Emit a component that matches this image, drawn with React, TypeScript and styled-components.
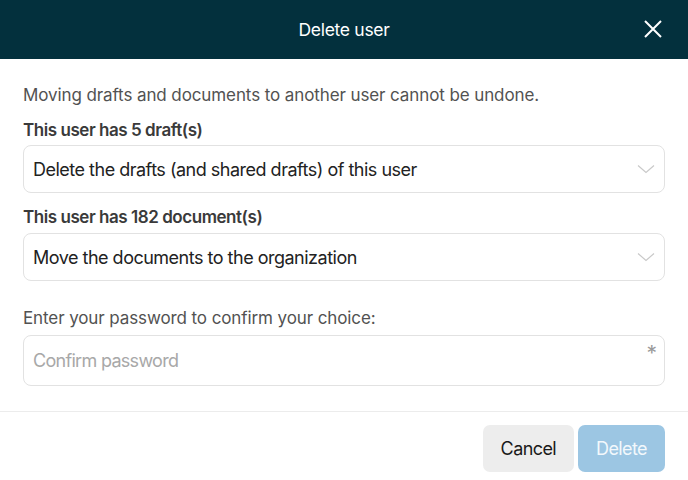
import React from "react";
import styled, { createGlobalStyle } from "styled-components";

const Global = createGlobalStyle`
  html, body { margin: 0; padding: 0; background: #ffffff; }
  body { font-family: Inter, "Noto Sans", sans-serif; color: #333; }
  * { box-sizing: border-box; }
`;

const Dialog = styled.div`
  width: 688px;
  height: 480px;
  background: #fff;
  display: flex;
  flex-direction: column;
`;

const Header = styled.header`
  height: 59px;
  background: #03303d;
  display: flex;
  align-items: center;
  justify-content: center;
  position: relative;
  color: #fff;
`;

const Title = styled.h1`
  margin: 0 0 1px;
  font-size: 17.5px;
  font-weight: 400;
  letter-spacing: -0.3px;
`;

const Close = styled.button`
  position: absolute;
  right: 24px;
  top: 18px;
  width: 22px;
  height: 22px;
  padding: 0;
  border: 0;
  background: none;
  display: flex;
  align-items: center;
  justify-content: center;
`;

const Body = styled.div`
  padding: 24px 23px 25px;
  display: flex;
  flex-direction: column;
`;

const Text = styled.p<{ $mt?: number; $bold?: boolean }>`
  margin: ${(p) => p.$mt ?? 0}px 0 0;
  font-size: 17px;
  line-height: 24px;
  letter-spacing: ${(p) => (p.$bold ? "-0.45px" : "-0.1px")};
  font-weight: ${(p) => (p.$bold ? 600 : 400)};
  color: ${(p) => (p.$bold ? "#3a3a3a" : "#525252")};
`;

const Field = styled.div<{ $mt: number; $h: number }>`
  margin-top: ${(p) => p.$mt}px;
  height: ${(p) => p.$h}px;
  border: 1px solid #e2e2e2;
  border-radius: 8px;
  display: flex;
  align-items: center;
  padding: 0 9px 0 9px;
  position: relative;
`;

const Value = styled.span<{ $placeholder?: boolean }>`
  flex: 1;
  font-size: 18px;
  letter-spacing: ${(p) => (p.$placeholder ? "-0.7px" : "-0.5px")};
  color: ${(p) => (p.$placeholder ? "#a8a8a8" : "#222")};
`;

const Asterisk = styled.span`
  position: absolute;
  right: 7px;
  top: 6px;
  font-size: 21px;
  line-height: 24px;
  color: #9a9a9a;
`;

const Footer = styled.footer`
  border-top: 1px solid #ececec;
  padding: 13px 23px 0;
  display: flex;
  justify-content: flex-end;
  gap: 4px;
`;

const Button = styled.button<{ $primary?: boolean }>`
  height: 47px;
  padding: 0 18px;
  border: 0;
  border-radius: 7px;
  font-family: Inter, sans-serif;
  font-size: 18px;
  letter-spacing: -0.6px;
  background: ${(p) => (p.$primary ? "#9cc6e3" : "#ededed")};
  color: ${(p) => (p.$primary ? "#f2f8fc" : "#1a1a1a")};
`;

const Chevron = () => (
  <svg width="18" height="10" viewBox="0 0 18 10" fill="none">
    <path d="M1 1.5l8 7 8-7" stroke="#c9c9c9" strokeWidth="1.2" />
  </svg>
);

export default function App() {
  return (
    <Dialog>
      <Global />
      <Header>
        <Title>Delete user</Title>
        <Close aria-label="Close">
          <svg width="20" height="20" viewBox="0 0 20 20">
            <path d="M2 2l16 16M18 2L2 18" stroke="#fff" strokeWidth="2" />
          </svg>
        </Close>
      </Header>
      <Body>
        <Text>Moving drafts and documents to another user cannot be undone.</Text>
        <Text $mt={11} $bold>This user has 5 draft(s)</Text>
        <Field $mt={3} $h={48}>
          <Value>Delete the drafts (and shared drafts) of this user</Value>
          <Chevron />
        </Field>
        <Text $mt={12} $bold>This user has 182 document(s)</Text>
        <Field $mt={4} $h={48}>
          <Value>Move the documents to the organization</Value>
          <Chevron />
        </Field>
        <Text $mt={25}>Enter your password to confirm your choice:</Text>
        <Field $mt={5} $h={51}>
          <Value $placeholder>Confirm password</Value>
          <Asterisk>*</Asterisk>
        </Field>
      </Body>
      <Footer>
        <Button>Cancel</Button>
        <Button $primary>Delete</Button>
      </Footer>
    </Dialog>
  );
}
